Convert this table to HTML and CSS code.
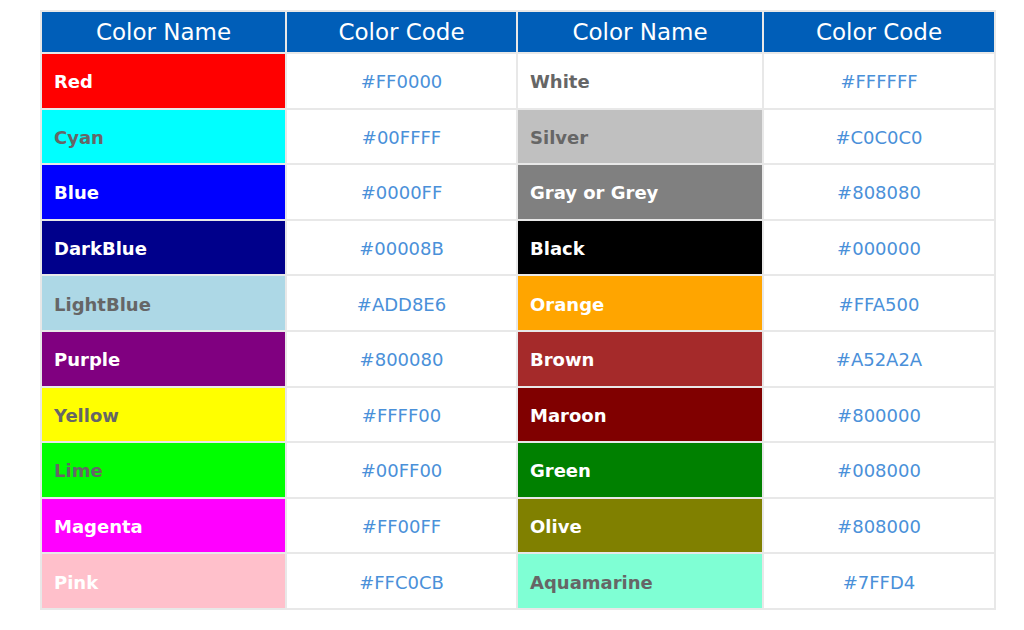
FILE: index.html
```html
<!DOCTYPE html>
<html>
<head>
<meta charset="utf-8">
<link rel="stylesheet" href="styles.css">
</head>
<body>
<table class="colors">
  <thead>
    <tr><th>Color Name</th><th>Color Code</th><th>Color Name</th><th>Color Code</th></tr>
  </thead>
  <tbody>
    <tr><td class="name red">Red</td><td class="code">#FF0000</td><td class="name white dark">White</td><td class="code">#FFFFFF</td></tr>
    <tr><td class="name cyan dark">Cyan</td><td class="code">#00FFFF</td><td class="name silver dark">Silver</td><td class="code">#C0C0C0</td></tr>
    <tr><td class="name blue">Blue</td><td class="code">#0000FF</td><td class="name gray">Gray or Grey</td><td class="code">#808080</td></tr>
    <tr><td class="name darkblue">DarkBlue</td><td class="code">#00008B</td><td class="name black">Black</td><td class="code">#000000</td></tr>
    <tr><td class="name lightblue dark">LightBlue</td><td class="code">#ADD8E6</td><td class="name orange">Orange</td><td class="code">#FFA500</td></tr>
    <tr><td class="name purple">Purple</td><td class="code">#800080</td><td class="name brown">Brown</td><td class="code">#A52A2A</td></tr>
    <tr><td class="name yellow dark">Yellow</td><td class="code">#FFFF00</td><td class="name maroon">Maroon</td><td class="code">#800000</td></tr>
    <tr><td class="name lime dark">Lime</td><td class="code">#00FF00</td><td class="name green">Green</td><td class="code">#008000</td></tr>
    <tr><td class="name magenta">Magenta</td><td class="code">#FF00FF</td><td class="name olive">Olive</td><td class="code">#808000</td></tr>
    <tr><td class="name pink">Pink</td><td class="code">#FFC0CB</td><td class="name aquamarine dark">Aquamarine</td><td class="code">#7FFD4</td></tr>
  </tbody>
</table>
</body>
</html>
```
FILE: styles.css
```css
html, body {
  margin: 0;
  padding: 0;
  background: #ffffff;
}
body {
  padding: 10px 0 0 40px;
  font-family: "DejaVu Sans", Verdana, sans-serif;
}
.colors {
  border-collapse: collapse;
  table-layout: fixed;
}
.colors th, .colors td {
  border: 2px solid #e8e8e8;
  padding: 0;
}
.colors th:nth-child(1) { width: 243px; }
.colors th:nth-child(2) { width: 229px; }
.colors th:nth-child(3) { width: 244px; }
.colors th:nth-child(4) { width: 230px; }
.colors th {
  background: #005eb8;
  color: #ffffff;
  font-weight: normal;
  font-size: 23px;
  height: 40px;
  text-align: center;
}
.colors td {
  box-sizing: border-box;
  height: 55.6px;
  font-size: 18px;
  padding-top: 2px;
}
.name {
  font-weight: bold;
  color: #ffffff;
  padding-left: 12px !important;
  text-align: left;
}
.name.dark { color: #666666; }
.code {
  text-align: center;
  color: #4a90d9;
  background: #ffffff;
}
.red { background: #ff0000; }
.white { background: #ffffff; }
.cyan { background: #00ffff; }
.silver { background: #c0c0c0; }
.blue { background: #0000ff; }
.gray { background: #808080; }
.darkblue { background: #00008b; }
.black { background: #000000; }
.lightblue { background: #add8e6; }
.orange { background: #ffa500; }
.purple { background: #800080; }
.brown { background: #a52a2a; }
.yellow { background: #ffff00; }
.maroon { background: #800000; }
.lime { background: #00ff00; }
.green { background: #008000; }
.magenta { background: #ff00ff; }
.olive { background: #808000; }
.pink { background: #ffc0cb; }
.aquamarine { background: #7fffd4; }
```
